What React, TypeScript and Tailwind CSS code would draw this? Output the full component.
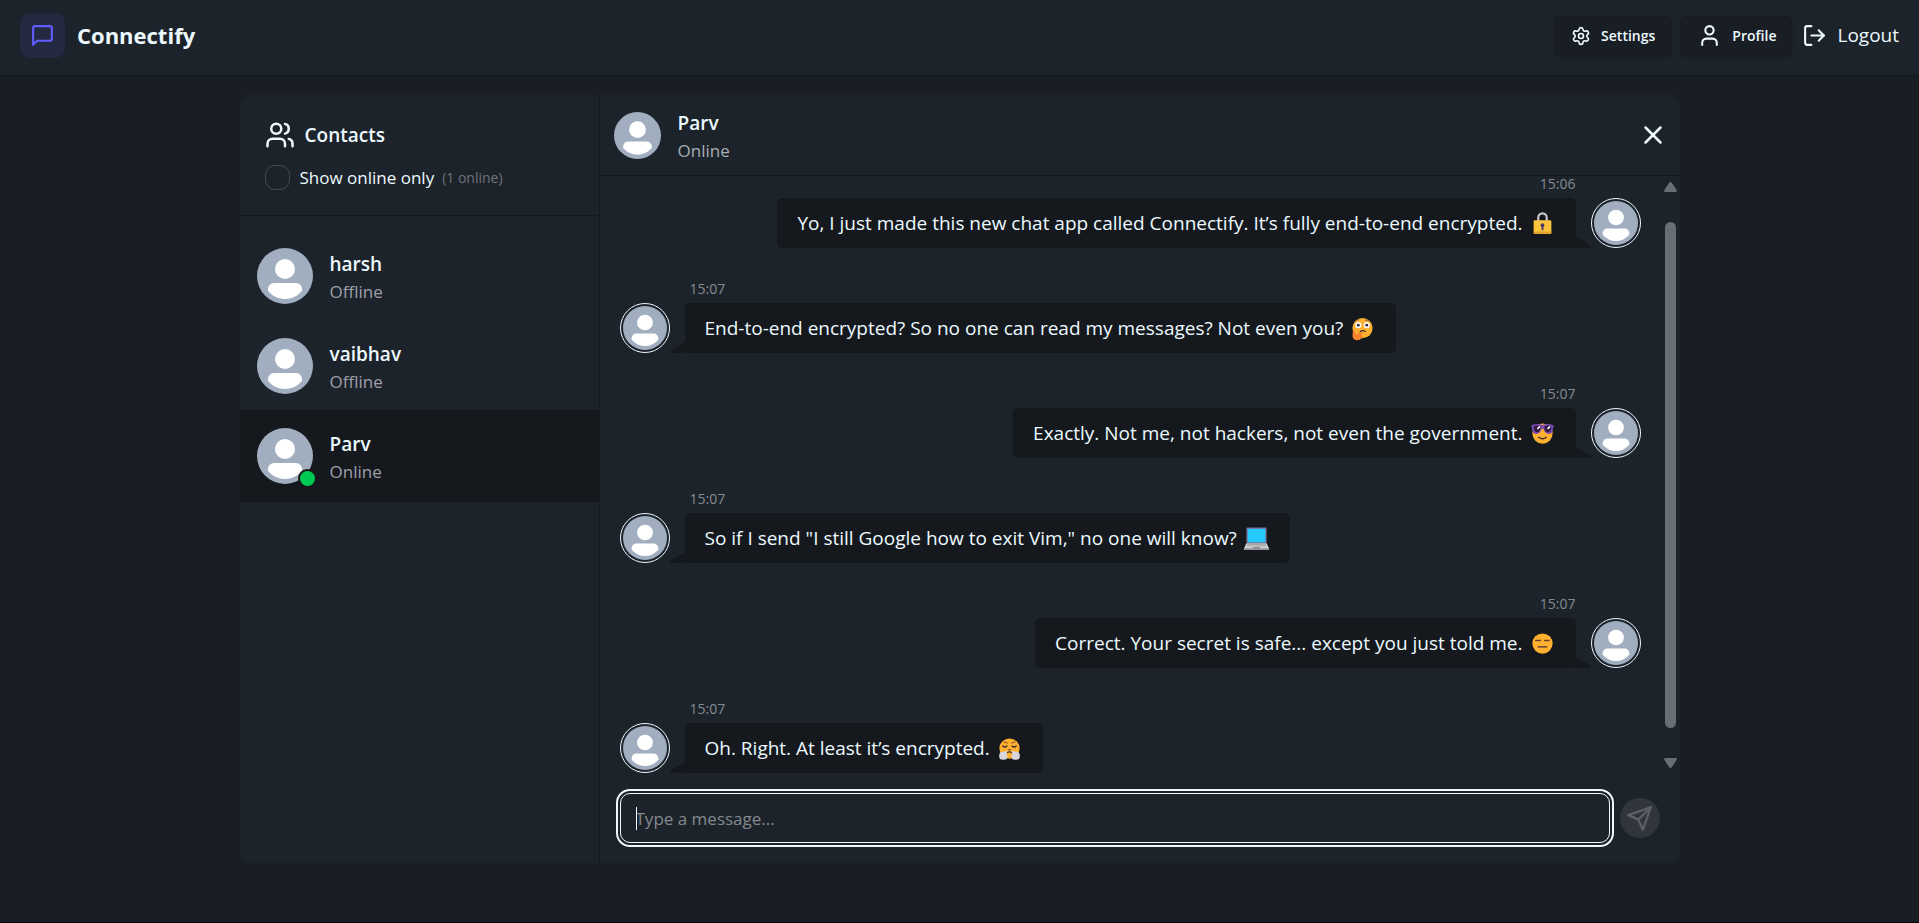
import type { ReactNode } from "react";
import { LogOut, Settings, User, Users, X } from "lucide-react";

function Face({ children, label }: { children: ReactNode; label: string }) {
  return (
    <svg role="img" aria-label={label} viewBox="0 0 32 32" className="size-[27px] shrink-0">
      {children}
    </svg>
  );
}

const Lock = () => (
  <Face label="locked">
    <path d="M11 13V9a5 5 0 0 1 10 0v4" fill="none" stroke="#c9c5cb" strokeWidth="2.6" />
    <rect x="5.5" y="12" width="21" height="16.500" rx="1.6" fill="#fcc33c" />
    <path d="M5.500 25.500h21v1.500a1.500 1.500 0 0 1-1.500 1.500H7a1.500 1.500 0 0 1-1.500-1.500z" fill="#e0a42c" />
    <circle cx="16" cy="18" r="2.200" fill="#433b6b" />
    <rect x="14.900" y="18" width="2.200" height="6" rx="1" fill="#433b6b" />
  </Face>
);

const Thinking = () => (
  <Face label="thinking">
    <circle cx="16" cy="15.500" r="12" fill="#ffb02e" />
    <circle cx="11" cy="12" r="3.600" fill="#fff" />
    <circle cx="21" cy="12" r="3.600" fill="#fff" />
    <circle cx="11" cy="12" r="1.700" fill="#402a32" />
    <circle cx="21" cy="12" r="1.700" fill="#402a32" />
    <path d="M8 6.500q2-1.500 4-.7M19 6q3-.5 4.500 1.500" fill="none" stroke="#7d4533" strokeWidth="1" />
    <path d="M13 20q3-2.500 6.500-.5" fill="none" stroke="#402a32" strokeWidth="1.500" strokeLinecap="round" />
    <path d="M4.500 19.500q1.500-2.500 3 .5l.8 3 6.500-2.300q2 .2 1.200 1.700l-1.500 1q2 1.500 1 3.500Q13.500 30 9 30q-4.500-.5-4.800-5z" fill="#ff822d" />
  </Face>
);

const Sunglasses = () => (
  <Face label="smiling face with sunglasses">
    <circle cx="16" cy="16" r="12" fill="#ffb02e" />
    <path d="M2.500 6.500Q9 3.500 16 6q7-2.500 13.500.5l-.8 2.500-.9 4.500q-1.200 3-4.600 3-4.800 0-6-6h-2.400q-1.200 6-6 6-3.400 0-4.600-3L3.300 9z" fill="#7a4bb0" />
    <path d="M5.500 7.500q4-2 8.500.4-.5 6.600-4.800 6.600-3.200 0-3.700-7zM26.500 7.500q-4-2-8.500.4.500 6.600 4.800 6.600 3.200 0 3.700-7z" fill="#321b41" />
    <path d="m10.500 10 2-1.800M22.500 10l2-1.800" stroke="#fff" strokeWidth="1.800" strokeLinecap="round" />
    <path d="M11.500 20.500q4.500 3.500 9 0" fill="none" stroke="#402a32" strokeWidth="1.600" strokeLinecap="round" />
  </Face>
);

const Laptop = () => (
  <Face label="laptop">
    <rect x="4" y="3" width="24" height="18.500" rx="1" fill="#7b6b96" />
    <rect x="5.500" y="4.500" width="21" height="16" fill="#26c9fc" />
    <path d="M4 21.500h24l3 6.500H1z" fill="#d3d3d3" />
    <path d="M5 23h22M4.500 24.700h23" stroke="#9b9b9b" strokeWidth="1" />
    <path d="M1 28h30v1.500H1z" fill="#a5a3a8" />
    <path d="M12 26h8l.6 1.700h-9.200z" fill="#85838a" />
  </Face>
);

const Expressionless = () => (
  <Face label="expressionless face">
    <circle cx="16" cy="16" r="12" fill="#ffb02e" />
    <path d="M8 12.500h5.500M18.500 12.500H24" stroke="#6b4232" strokeWidth="1.700" strokeLinecap="round" />
    <path d="M11 20h10" stroke="#402a32" strokeWidth="1.700" strokeLinecap="round" />
  </Face>
);

const Huffing = () => (
  <Face label="face with steam from nose">
    <circle cx="16" cy="16" r="12" fill="#ffb02e" />
    <path d="M9 8.500q3-.5 4.500 1.500M23 8.500q-3-.5-4.500 1.500" fill="none" stroke="#7d4533" strokeWidth="1.200" />
    <path d="M8 13q2.500 2.500 5 0M19 13q2.500 2.500 5 0" fill="none" stroke="#402a32" strokeWidth="1.500" strokeLinecap="round" />
    <path d="M14.500 17.500h3M12.500 21.500q3.500-3 7 0" fill="none" stroke="#402a32" strokeWidth="1.300" />
    <path d="M13.500 19q-3-.5-4.500 1-4-1-5 2.500-1 6 2.500 6.500 5 .8 6.500-1 1.500-2.500-.5-4.500zM18.500 19q3-.5 4.500 1 4-1 5 2.500 1 6-2.500 6.500-5 .8-6.500-1-1.500-2.500.5-4.500z" fill="#d8d6dc" />
  </Face>
);

function Avatar({ className }: { className: string }) {
  return (
    <svg role="img" aria-label="avatar" viewBox="0 0 56 56" className={className}>
      <circle cx="28" cy="28" r="28" fill="#a0aec0" />
      <circle cx="28" cy="21" r="10" fill="#fff" />
      <path d="M17 35h22a6 6 0 0 1 6 6v2Q38 51 28 51T11 43v-2a6 6 0 0 1 6-6z" fill="#fff" />
    </svg>
  );
}

const contacts = [
  { name: "harsh", online: false },
  { name: "vaibhav", online: false },
  { name: "Parv", online: true },
];

const messages = [
  { mine: true, time: "15:06", text: "Yo, I just made this new chat app called Connectify. It’s fully end-to-end encrypted.", emoji: <Lock /> },
  { mine: false, time: "15:07", text: "End-to-end encrypted? So no one can read my messages? Not even you?", emoji: <Thinking /> },
  { mine: true, time: "15:07", text: "Exactly. Not me, not hackers, not even the government.", emoji: <Sunglasses /> },
  { mine: false, time: "15:07", text: 'So if I send "I still Google how to exit Vim," no one will know?', emoji: <Laptop /> },
  { mine: true, time: "15:07", text: "Correct. Your secret is safe... except you just told me.", emoji: <Expressionless /> },
  { mine: false, time: "15:07", text: "Oh. Right. At least it’s encrypted.", emoji: <Huffing /> },
];

type MessageData = (typeof messages)[number];

function Message({ mine, time, text, emoji }: MessageData) {
  return (
    <li className={mine ? "flex flex-row-reverse items-end gap-[15px]" : "flex items-end gap-[15px]"}>
      <div className="size-[50px] shrink-0 rounded-full border border-[#ecf9ff] p-[2px]">
        <Avatar className="size-full" />
      </div>
      <div className={mine ? "flex flex-col items-end" : "flex flex-col items-start"}>
        <time className={mine ? "mb-[6px] text-sm leading-4 text-[#858b92]" : "mb-[6px] ml-[5px] text-sm leading-4 text-[#858b92]"}>{time}</time>
        <div className="relative flex min-h-[50px] items-center gap-[6px] rounded-[5px] bg-[#15191e] px-5 text-[19px] leading-[30px]">
          <p>{text}</p>
          {emoji}
          <svg
            aria-hidden="true"
            viewBox="0 0 16 13"
            className={mine ? "absolute bottom-0 left-full -ml-px h-[13px] w-4" : "absolute right-full bottom-0 -mr-px h-[13px] w-4 -scale-x-100"}
          >
            <path d="M0 0q1 2 4 4l9 5q3 2 3 3t-2 1H0z" fill="#15191e" />
          </svg>
        </div>
      </div>
    </li>
  );
}

export default function App() {
  return (
    <div className="flex h-screen flex-col border-b border-black bg-[#191e24] font-['Open_Sans','Noto_Sans',sans-serif] text-[#ecf9ff]">
      <header className="flex h-[76px] shrink-0 items-center justify-between border-b border-[#15191e] bg-[#1d232a] px-5 pb-1">
        <a href="#" className="flex items-center gap-3">
          <span className="flex size-[45px] items-center justify-center rounded-[10px] bg-[#242942]">
            <svg aria-hidden="true" viewBox="0 0 24 24" className="size-[25px]" fill="none" stroke="#605dff" strokeWidth="2" strokeLinecap="round" strokeLinejoin="round">
              <path d="M21 15a2 2 0 0 1-2 2H7l-4 4V5a2 2 0 0 1 2-2h14a2 2 0 0 1 2 2z" />
            </svg>
          </span>
          <h1 className="text-[22px] font-bold">Connectify</h1>
        </a>
        <nav className="flex items-center gap-[10px]">
          <button type="button" className="flex h-10 items-center gap-[10px] rounded-[5px] border border-[#171b20] bg-[#191e24] px-[15px] text-sm font-semibold shadow-sm">
            <Settings className="size-5" />
            Settings
          </button>
          <button type="button" className="flex h-10 items-center gap-[10px] rounded-[5px] border border-[#171b20] bg-[#191e24] px-[15px] text-sm font-semibold shadow-sm">
            <User className="size-[25px]" />
            Profile
          </button>
          <button type="button" className="flex items-center gap-[10px] text-[19px]">
            <LogOut className="size-[25px]" />
            Logout
          </button>
        </nav>
      </header>

      <main className="flex min-h-0 flex-1 px-5 pt-[19px] pb-[59px]">
        <div className="mx-auto flex w-full max-w-[1440px] overflow-hidden rounded-[10px] bg-[#1d232a]">
          <aside className="flex w-[360px] shrink-0 flex-col border-r border-[#15191e]">
            <div className="flex h-[121px] shrink-0 flex-col gap-[15px] border-b border-[#15191e] px-[25px] pt-[25px]">
              <div className="flex h-[30px] items-center gap-[10px]">
                <Users className="size-[30px]" />
                <h2 className="text-[19px] font-semibold">Contacts</h2>
              </div>
              <div className="flex h-[25px] items-center gap-2">
                <label className="flex items-center gap-[10px] text-[17px]">
                  <input type="checkbox" className="size-[25px] appearance-none rounded-[10px] border border-[#464b52] checked:bg-[#605dff]" />
                  Show online only
                </label>
                <span className="text-sm text-[#71717b]">(1 online)</span>
              </div>
            </div>
            <ul className="py-[15px]">
              {contacts.map(({ name, online }) => (
                <li key={name}>
                  <button
                    type="button"
                    className={
                      name === "Parv"
                        ? "flex h-[90px] w-full items-center gap-[17px] bg-[#15191e] px-[17px] text-left ring-1 ring-[#15191e]"
                        : "flex h-[90px] w-full items-center gap-[17px] px-[17px] text-left"
                    }
                  >
                    <span className="relative">
                      <Avatar className="size-14" />
                      {online && <span className="absolute -right-[2px] -bottom-[2px] size-[15px] rounded-full bg-[#00c951] ring-2 ring-[#18181b]" />}
                    </span>
                    <span className="flex flex-col">
                      <span className="text-[19px] leading-[30px] font-semibold">{name}</span>
                      <span className="text-[17px] leading-[25px] text-[#9f9fa9]">{online ? "Online" : "Offline"}</span>
                    </span>
                  </button>
                </li>
              ))}
            </ul>
          </aside>

          <section className="flex min-w-0 flex-1 flex-col">
            <div className="flex h-[81px] shrink-0 items-center justify-between border-b border-[#15191e] pr-3 pl-[14px]">
              <div className="flex items-center gap-[17px]">
                <Avatar className="size-[47px]" />
                <div>
                  <h3 className="text-[19px] leading-[30px] font-semibold">Parv</h3>
                  <p className="text-[17px] leading-[25px] text-[#a5adb5]">Online</p>
                </div>
              </div>
              <button type="button" aria-label="Close chat">
                <X className="size-[30px]" />
              </button>
            </div>

            <div className="flex min-h-0 flex-1">
              <ul className="flex min-w-0 flex-1 flex-col justify-end gap-[33px] overflow-hidden pr-[23px] pl-5">
                {messages.map((message) => (
                  <Message key={message.text} {...message} />
                ))}
              </ul>
              <div aria-hidden="true" className="flex w-4 flex-col items-start pt-[6px] pb-[5px]">
                <svg viewBox="0 0 13 10" className="h-[10px] w-[13px]" fill="#686e75">
                  <path d="M6.500 0q.8 0 1.500 1l4.600 7q.8 2-.8 2H1.200Q-.4 10 .4 8L5 1q.7-1 1.500-1z" />
                </svg>
                <div className="flex w-[13px] flex-1 justify-center pt-[30px] pb-[30px]">
                  <div className="w-[11px] rounded-full bg-[#686e75]" />
                </div>
                <svg viewBox="0 0 13 10" className="h-[10px] w-[13px] -scale-y-100" fill="#686e75">
                  <path d="M6.500 0q.8 0 1.500 1l4.600 7q.8 2-.8 2H1.200Q-.4 10 .4 8L5 1q.7-1 1.500-1z" />
                </svg>
              </div>
            </div>

            <form className="flex shrink-0 items-center gap-[10px] p-5">
              <div className="relative flex flex-1 items-center">
                <input
                  type="text"
                  aria-label="Message"
                  placeholder="Type a message..."
                  className="h-[50px] w-full rounded-[10px] border border-[#ecf9ff] bg-[#1d232a] px-[15px] text-[17px] caret-transparent outline-2 outline-offset-2 outline-[#ecf9ff] placeholder:text-[#83898f]"
                />
                <span aria-hidden="true" className="absolute left-4 h-[23px] w-px bg-[#ecf9ff]" />
              </div>
              <button type="submit" aria-label="Send" disabled className="flex size-10 items-center justify-center rounded-full bg-[#31363e] text-[#5c6169]">
                <svg aria-hidden="true" viewBox="0 0 24 24" className="size-[27px]" fill="none" stroke="currentColor" strokeWidth="2" strokeLinecap="round" strokeLinejoin="round">
                  <path d="m22 2-7 20-4-9-9-4Z" />
                  <path d="M22 2 11 13" />
                </svg>
              </button>
            </form>
          </section>
        </div>
      </main>
    </div>
  );
}
